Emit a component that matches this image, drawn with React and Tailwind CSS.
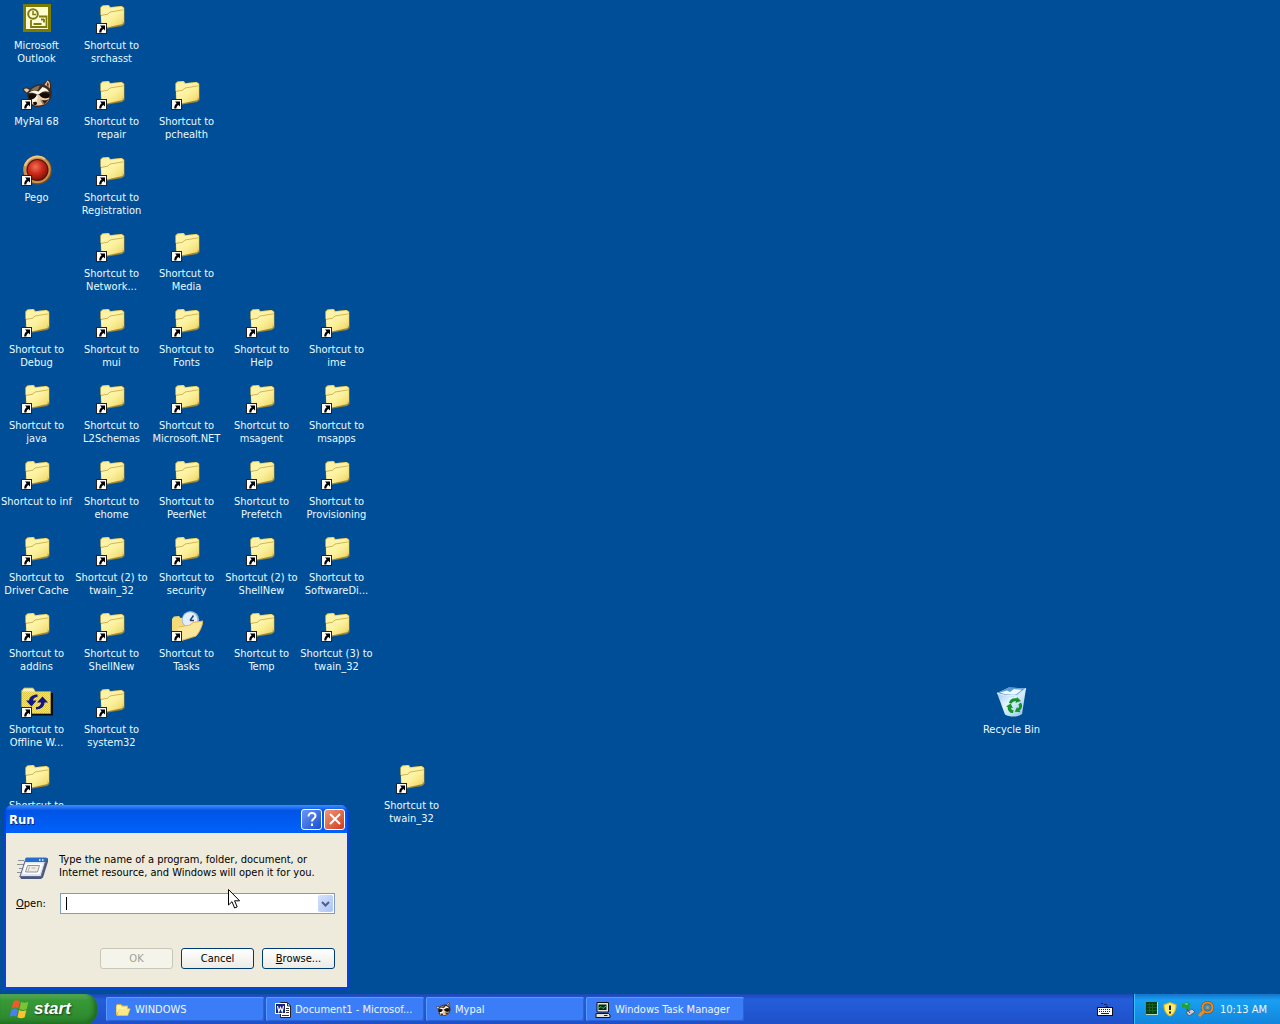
import React from 'react';

const items = [
  [1, 1, 'outlook', 'Microsoft', 'Outlook'],
  [2, 1, 'folder', 'Shortcut to', 'srchasst'],
  [1, 2, 'raccoon', 'MyPal 68'],
  [2, 2, 'folder', 'Shortcut to', 'repair'],
  [3, 2, 'folder', 'Shortcut to', 'pchealth'],
  [1, 3, 'pego', 'Pego'],
  [2, 3, 'folder', 'Shortcut to', 'Registration'],
  [2, 4, 'folder', 'Shortcut to', 'Network...'],
  [3, 4, 'folder', 'Shortcut to', 'Media'],
  [1, 5, 'folder', 'Shortcut to', 'Debug'],
  [2, 5, 'folder', 'Shortcut to', 'mui'],
  [3, 5, 'folder', 'Shortcut to', 'Fonts'],
  [4, 5, 'folder', 'Shortcut to', 'Help'],
  [5, 5, 'folder', 'Shortcut to', 'ime'],
  [1, 6, 'folder', 'Shortcut to', 'java'],
  [2, 6, 'folder', 'Shortcut to', 'L2Schemas'],
  [3, 6, 'folder', 'Shortcut to', 'Microsoft.NET'],
  [4, 6, 'folder', 'Shortcut to', 'msagent'],
  [5, 6, 'folder', 'Shortcut to', 'msapps'],
  [1, 7, 'folder', 'Shortcut to inf'],
  [2, 7, 'folder', 'Shortcut to', 'ehome'],
  [3, 7, 'folder', 'Shortcut to', 'PeerNet'],
  [4, 7, 'folder', 'Shortcut to', 'Prefetch'],
  [5, 7, 'folder', 'Shortcut to', 'Provisioning'],
  [1, 8, 'folder', 'Shortcut to', 'Driver Cache'],
  [2, 8, 'folder', 'Shortcut (2) to', 'twain_32'],
  [3, 8, 'folder', 'Shortcut to', 'security'],
  [4, 8, 'folder', 'Shortcut (2) to', 'ShellNew'],
  [5, 8, 'folder', 'Shortcut to', 'SoftwareDi...'],
  [1, 9, 'folder', 'Shortcut to', 'addins'],
  [2, 9, 'folder', 'Shortcut to', 'ShellNew'],
  [3, 9, 'tasks', 'Shortcut to', 'Tasks'],
  [4, 9, 'folder', 'Shortcut to', 'Temp'],
  [5, 9, 'folder', 'Shortcut (3) to', 'twain_32'],
  [1, 10, 'offline', 'Shortcut to', 'Offline W...'],
  [2, 10, 'folder', 'Shortcut to', 'system32'],
  [14, 10, 'bin', 'Recycle Bin'],
  [1, 11, 'folder', 'Shortcut to'],
  [6, 11, 'folder', 'Shortcut to', 'twain_32'],
];

function Defs() {
  return (
    <svg width="0" height="0" className="absolute" aria-hidden="true">
      <defs>
        <linearGradient id="fold" x1="0" y1="0" x2="1" y2="1">
          <stop offset="0" stopColor="#fffbc4" />
          <stop offset="0.5" stopColor="#fbf09a" />
          <stop offset="1" stopColor="#ecd25c" />
        </linearGradient>
        <radialGradient id="red" cx="0.4" cy="0.35" r="0.7">
          <stop offset="0" stopColor="#f0705a" />
          <stop offset="0.5" stopColor="#cc2a18" />
          <stop offset="1" stopColor="#7c1008" />
        </radialGradient>
        <linearGradient id="glass" x1="0" y1="0" x2="1" y2="1">
          <stop offset="0" stopColor="#8fc0e8" />
          <stop offset="0.45" stopColor="#e4f4ff" />
          <stop offset="1" stopColor="#8fc0e6" />
        </linearGradient>
        <pattern id="dither" width="2" height="2" patternUnits="userSpaceOnUse">
          <rect width="2" height="2" fill="#f4e566" />
          <rect width="1" height="1" fill="#dfca48" />
          <rect x="1" y="1" width="1" height="1" fill="#dfca48" />
        </pattern>
      </defs>
    </svg>
  );
}

function Arrow() {
  return (
    <g>
      <rect x="0.5" y="20.5" width="10" height="10" fill="#fff" stroke="#222" />
      <path d="M4 22.500h5v5l-1.600-1.600c-1.400 1.100-2 2-2 3.600H3.200c0-2.400.9-3.900 2.400-5.200z" fill="#000" />
    </g>
  );
}

function Folder() {
  return (
    <g>
      <path d="M4.500 4.500 6.500 2.500l6.500-.5 1.500 2L26 3l2.500 2v16L26 23 8.500 26 5 24z" fill="#9c8638" />
      <path d="M4.500 4.500 6.500 2.500l6-.5 1.800 2.200L25.500 3 28 4.800v15.700L22 9 4.500 12z" fill="#f2d96c" />
      <path d="M5 5.500 7 3.500l5-.5 1.800 2.300 11-1.600L27 5v2.500L13 9.800 11 12l-6 .6z" fill="#fdf3a8" />
      <path d="M5 12.500 11.500 11.500 14 9.200 27.500 7l-.8 14L8.500 25 5.500 23z" fill="url(#fold)" />
      <path d="M5 12.300 11.500 11.300 14 9l13.500-2.200" fill="none" stroke="#cdb04a" strokeWidth="0.9" />
    </g>
  );
}

function Raccoon() {
  return (
    <g>
      <path d="M2 9.500c2-1.500 5-1.500 7 .5C12 6.500 17 4.500 22.500 5.500L26.500.5c3 .5 4.500 4.500 3.500 9 1.500 4 1.300 8-1 11.500-2.500 4.500-8 7.500-14 7-4-.4-7-3-7.500-6.500L5.500 14C3.500 13 2 11.500 2 9.500z" fill="#3a2a1e" />
      <path d="M3 10c1.700-1 4-.5 5.500 1L6 13.500C4.500 12.500 3.200 11.500 3 10zM23.500 6l3-4.500c2.300 1 3 4.500 2 8-1-1.700-2.800-3-5-3.500z" fill="#eec9a6" />
      <path d="M25.500 6l1.200-3c1.200 1 1.200 3.500.8 5z" fill="#5c3020" />
      <path d="M9 12c2.500-3.500 6-5 10-5.500l-2 4.500c-3-.3-5.500 0-8 1z" fill="#857058" />
      <path d="M7.500 14c3-3 7-3.300 10-1.500l4-4.500c3 .6 5.500 2.500 6.500 5-3-1.500-6-1-9 1.500-1 1-2 1.300-3 .8-2.500-1.500-5.500-2-8.500-1.300z" fill="#fff6e6" />
      <path d="M16 15l3 1.500c1.500 2.500 5 3.500 9.500 2-1.500 4.500-5.500 7.500-10.500 8-4 .4-7-.7-8.500-3C12 21.500 14.500 19 16 15z" fill="#e9cda9" />
      <path d="M7.500 16c2.500-1.500 5.500-1.300 8 0-.5 2.700-3 4.500-7 4.500-1-1.300-1.300-3-1-4.500zM18.500 15.500c3-2.500 7-2.500 10 0 .5 2-1 3.500-3.500 3.800-2.500.2-5.300-1.300-6.500-3.800z" fill="#120c08" />
      <path d="M9 20.500c3.500 0 5.500-1.500 7-4.500.8 2 .8 4.500-.5 6.500-2 1.500-5 1-6.500-2z" fill="#fff6e8" />
      <path d="M19 20.500c3 1.500 6.500 1 9.500-1-1 3-3.500 5.500-6.500 6.500z" fill="#a57c58" />
      <path d="M21 21c2.300.7 4.500.5 6.500-.6L23.500 25z" fill="#2a1a12" />
      <path d="M12 23.500c1.500-1.300 4-.8 4 .7s-2 2.300-3.200 1.700z" fill="#120c0a" />
    </g>
  );
}

function DeskIcon({ kind }) {
  return (
    <svg viewBox="0 0 32 32" className="h-8 w-8" aria-hidden="true">
      {kind === 'folder' && <Folder />}
      {kind === 'outlook' && (
        <g fill="none" stroke="#7c7a10">
          <rect x="3.500" y="2.500" width="25" height="25" fill="#fffbd0" stroke="#7c7a00" strokeWidth="3" />
          <circle cx="12" cy="11" r="4.800" strokeWidth="2" />
          <path d="M12 8v3.500h3" strokeWidth="1.500" />
          <path d="M18 13.500h7.500v10.500H10v-7" strokeWidth="1.800" />
          <path d="M12.500 21h8M20 16.500h3M23 16v3.500" strokeWidth="1.800" />
        </g>
      )}
      {kind === 'raccoon' && <Raccoon />}
      {kind === 'pego' && (
        <g>
          <circle cx="16.500" cy="15" r="14.500" fill="#7a4a1c" />
          <circle cx="16" cy="14.500" r="13.700" fill="#c8924e" />
          <path d="M4 11A13 13 0 0 1 24 4" fill="none" stroke="#ecc88c" strokeWidth="2" />
          <circle cx="16.500" cy="15" r="11" fill="#4e120a" />
          <circle cx="16.500" cy="15" r="10" fill="url(#red)" />
        </g>
      )}
      {kind === 'tasks' && (
        <g>
          <path d="M1 8l2-2.500 5-.5 1.500 2L24 5v20L5 28 1 24z" fill="#f3d978" />
          <circle cx="19.500" cy="8.700" r="8.700" fill="#8eb0d4" />
          <circle cx="19" cy="8.700" r="7.400" fill="#e2eefb" />
          <path d="M19 9.500l3.500-5M19 9.500h4" stroke="#23456f" strokeWidth="1.500" fill="none" />
          <path d="M8 16l11-2 3-2.500L32 10c-1 6-4 12-7 15L9 30 3 26z" fill="#fae69a" />
          <path d="M8 16l11-2 3-2.500L32 10c-1 6-4 12-7 15L9 30" fill="none" stroke="#e3b75b" />
        </g>
      )}
      {kind === 'offline' && (
        <g>
          <path d="M2 27.500h29V6" fill="none" stroke="#0a0a14" strokeWidth="2" />
          <path d="M.5 26V4L3 1h9l2.500 3.500H29.500V26.500H.5z" fill="url(#dither)" stroke="#a89440" />
          <path d="M1 4.500 3 1.500h9L14 4.500z" fill="#f4f0c8" />
          <path d="M16.500 7.500c-5 0-8 2.500-8.500 6H5l5.500 6 5-6h-3.500c.2-2 2-3.500 4.500-3.500zM15 22.500c5 0 8.500-3 8.500-7H27l-5.500-6L16 15.500h4c0 2.500-2 4.500-5 4.500z" fill="#14148c" />
        </g>
      )}
      {kind === 'bin' && (
        <g>
          <path d="M1 6 13 .5 30 1.500 26 27c-4 3.200-12 3.500-17 .5z" fill="url(#glass)" />
          <path d="M1 6 13 .5 30 1.500 21 9C14 9.500 7 8.500 1 6z" fill="#5b9bd2" />
          <path d="M4 5.500l7-2 3 1.500 4-3 8 .8-6 4.700c-6 .5-11 0-16-2z" fill="#eef9ff" />
          <path d="M1 6c6 2.500 13 3 20 2.500L30 1.500" fill="none" stroke="#d7efff" strokeWidth="1.200" />
          <path d="M13 16c.5-3.500 4-5.500 7.500-4.500L21 10l4 4-5.500 2 .5-1.700c-2-.5-3.700.5-4.200 2.200zM25 15.500c2 3 1.200 6.500-1.500 8l1 1.700-5.700-.5 2.300-4.700.9 1.500c1.200-1 1.300-3 .4-4.300zM17 26c-3.500 0-5.700-2.700-5.200-6L10 19.500l4.700-3 2.300 4.700-2-.4c0 1.500 1 2.500 2.500 2.500z" fill="#14942a" />
        </g>
      )}
      {kind !== 'outlook' && kind !== 'bin' && <Arrow />}
    </svg>
  );
}

function DesktopItem({ item: [col, row, kind, ...lines] }) {
  return (
    <li style={{ gridColumn: col, gridRow: row }}>
      <button type="button" className="flex w-full flex-col items-center gap-1 whitespace-nowrap pt-[3px] text-[#e9fbff]">
        <DeskIcon kind={kind} />
        <span>
          {lines.map((l) => (
            <span key={l} className="block">{l}</span>
          ))}
        </span>
      </button>
    </li>
  );
}

function RunDialog() {
  return (
    <section
      aria-label="Run"
      className="absolute bottom-1 left-1 w-[345px] rounded-t-lg border-x-2 border-b-3 border-[#0842d8] bg-[#0b50e8] text-black"
    >
      <header className="flex h-7 items-center gap-0.5 rounded-t-md bg-linear-to-b from-[#3c8cff] from-0% via-[#0054e6] via-20% to-[#0062fb] pr-0.5 pl-[3px]">
        <h1 className="flex-1 text-[13px] font-bold text-white [text-shadow:1px_1px_#0a2a80]">Run</h1>
        <button type="button" aria-label="Help" className="flex size-[21px] items-center justify-center rounded-[3px] border border-white bg-linear-to-br from-[#6b96f6] to-[#1a4ed0]">
          <svg viewBox="0 0 12 14" className="h-3.5 w-3" fill="none" stroke="#fff" strokeWidth="2" aria-hidden="true">
            <path d="M2.500 4.500C2.500 2.200 4 1 6 1s3.500 1.200 3.500 3C9.500 6.500 6 6.500 6 9.500M6 11.500V14" />
          </svg>
        </button>
        <button type="button" aria-label="Close" className="flex size-[21px] items-center justify-center rounded-[3px] border border-white bg-linear-to-br from-[#f09478] to-[#cc3a12]">
          <svg viewBox="0 0 12 12" className="size-3" stroke="#fff" strokeWidth="2" aria-hidden="true">
            <path d="M1 1l10 10M11 1 1 11" />
          </svg>
        </button>
      </header>
      <form className="bg-[#eeebdd] pt-[19px] pr-3 pb-[18px] pl-2.5" onSubmit={(e) => e.preventDefault()}>
        <div className="flex items-center gap-[11px]">
          <svg viewBox="0 0 32 32" className="-mb-1 size-8 shrink-0" aria-hidden="true">
            <path d="M2 8.500h6M1 12.500h7M3 16.500h3M1 20.500h4M3 24.500h2" stroke="#8b8f9c" />
            <path d="M10 6h21.500l1 2-5.500 17.500-2 1.500H5l-1-2z" fill="#4d5878" />
            <path d="M10 6h20.500L25 24.500H4z" fill="#dfe4ef" stroke="#5c6a90" />
            <path d="M10.200 6h20.500l-1.200 4H9z" fill="#2270cc" />
            <path d="M23 8h1.500M26 8h1.500" stroke="#fff" strokeWidth="1.500" />
            <path d="M9.500 11.500H27L23.500 22H6.500z" fill="#fff" />
            <path d="M11.500 13.500h12l-2 6.500H9.500z" fill="#f0eedf" stroke="#8c93a6" />
            <path d="M13.500 14.500l-1.500 5M15.500 16h4" stroke="#b4b6bc" />
          </svg>
          <p>
            Type the name of a program, folder, document, or
            <br />
            Internet resource, and Windows will open it for you.
          </p>
        </div>
        <div className="mt-[13px] flex items-center">
          <label htmlFor="open" className="w-11">
            <u>O</u>pen:
          </label>
          <div className="flex h-[21px] flex-1 border border-[#7f9db9] bg-white p-px">
            <input id="open" type="text" className="w-0 flex-1 bg-[linear-gradient(#000,#000)] bg-[length:1px_13px] bg-[position:4px_2px] bg-no-repeat px-1 outline-none" />
            <button type="button" aria-label="Show history" className="flex w-[15px] items-center justify-center rounded-xs bg-linear-to-br from-[#d6e1fd] to-[#aec3f6]">
              <svg viewBox="0 0 9 6" className="h-1.5 w-[9px]" fill="none" stroke="#4d6185" strokeWidth="2" aria-hidden="true">
                <path d="M1 1l3.500 3.500L8 1" />
              </svg>
            </button>
          </div>
        </div>
        <div className="mt-[34px] flex justify-end gap-2">
          <button type="submit" disabled className="h-[21px] w-[73px] rounded-[3px] border border-[#c9c7ba] bg-[#f5f4ea] text-[#a1a192]">
            OK
          </button>
          <button type="button" className="h-[21px] w-[73px] rounded-[3px] border border-[#003c74] bg-linear-to-b from-white to-[#ecebe5]">
            Cancel
          </button>
          <button type="button" className="h-[21px] w-[73px] rounded-[3px] border border-[#003c74] bg-linear-to-b from-white to-[#ecebe5]">
            <u>B</u>rowse...
          </button>
        </div>
      </form>
    </section>
  );
}

function TaskIcon({ kind }) {
  return (
    <svg viewBox="0 0 16 16" className="size-4 shrink-0" aria-hidden="true">
      {kind === 'folder' && (
        <g>
          <path d="M1 3.500 2 2h4l1.500 1.500H13V6l2.500.5L13 14H2l-1-1z" fill="#d9b23c" />
          <path d="M1.500 4 2.500 3h3L7 4.500h5.200V7H5L1.500 12z" fill="#fff2a0" />
          <path d="M4.800 7H15l-2.600 6.200H2.200z" fill="#fbe887" />
        </g>
      )}
      {kind === 'word' && (
        <g>
          <path d="M5.500.5h7L15.500 4v11.500h-10z" fill="#fff" stroke="#222" />
          <path d="M12.500.5V4h3M11 6.500h3M11 8.500h3M11 10.500h3M7 13.500h7" stroke="#333" fill="none" />
          <rect x="0.500" y="1.500" width="10" height="10" fill="#14207c" stroke="#fff" />
          <path d="M2.500 4l1.300 5.500 1.700-4 1.700 4L8.500 4" fill="none" stroke="#fff" strokeWidth="1.200" />
        </g>
      )}
      {kind === 'raccoon' && (
        <g transform="scale(.5)">
          <Raccoon />
        </g>
      )}
      {kind === 'monitor' && (
        <g>
          <path d="M2 .5h11.500v9.500H2zM1 11.500h12.500L15 13v2.500H1z" fill="#e5e2d8" stroke="#111" />
          <rect x="3.500" y="2.500" width="8" height="5.500" fill="#032a10" />
          <path d="M4 6l2-1.500L8 6.500 11 4" stroke="#2ccf5c" fill="none" />
          <path d="M9 13.500h3.500" stroke="#222" />
        </g>
      )}
    </svg>
  );
}

const tasks = [
  ['folder', 'WINDOWS'],
  ['word', 'Document1 - Microsof...'],
  ['raccoon', 'Mypal'],
  ['monitor', 'Windows Task Manager'],
];

function Taskbar() {
  return (
    <footer className="flex h-[30px] items-stretch bg-linear-to-b from-[#1a47b4] from-0% via-[#245edb] via-20% to-[#1f50c8] text-[#eef6ff]">
      <button
        type="button"
        className="flex w-[97px] items-center gap-0.5 rounded-r-xl bg-linear-to-b from-[#5aa95a] from-0% via-[#379a37] via-20% to-[#2c852c] pl-2.5 shadow-[inset_-3px_-2px_4px_#1f6a22]"
      >
        <svg viewBox="1 1 18 18" className="size-5" aria-hidden="true">
          <path d="M4 3c2-1.300 4-1.200 6 .1L8.500 9.500c-2-1.200-4-1.200-6 0z" fill="#ee5a28" />
          <path d="M11 3.500c2 1.200 4 1.200 6.500 0L16 10c-2 1.200-4.500 1.200-6.500 0z" fill="#7cc435" />
          <path d="M2.200 10.500c2-1.200 4-1.100 6 .1l-1.500 6.400c-2-1.200-4-1.200-6 0z" fill="#4a7ff0" />
          <path d="M9.200 11c2 1.200 4.500 1.200 6.500 0l-1.500 6.500c-2 1.200-4.500 1.200-6.500 0z" fill="#fbc52a" />
        </svg>
        <span className="pl-0.5 font-['Liberation_Sans',Arial,sans-serif] text-[17px] leading-5 font-bold text-white italic [text-shadow:1px_1px_2px_#14401a]">
          start
        </span>
      </button>
      <nav aria-label="Open windows" className="flex flex-1 gap-0.5 py-[3px] pl-[9px]">
        {tasks.map(([kind, label]) => (
          <button
            key={label}
            type="button"
            className="flex w-[158px] items-center gap-1 rounded-xs border-t border-l border-[#5c9cff] bg-[#3b7df6] pl-2 shadow-[inset_-1px_-1px_#2a62d8]"
          >
            <TaskIcon kind={kind} />
            <span className="truncate">{label}</span>
          </button>
        ))}
      </nav>
      <button type="button" aria-label="Keyboard" className="mr-5 self-center">
        <svg viewBox="0 0 16 16" className="size-4" aria-hidden="true">
          <path d="M4 2.500h2M7 3.500h3M9 5.500h2" stroke="#16245c" />
          <rect x="0.500" y="6.500" width="15" height="8" fill="#fff" stroke="#111" />
          <path d="M2 8.500h12M2 10.500h12" stroke="#222" strokeDasharray="1 1" />
          <path d="M4 12.500h8" stroke="#222" />
        </svg>
      </button>
      <aside aria-label="Notification area" className="flex w-[147px] items-center gap-0.5 border-l border-[#0b3c9c] bg-linear-to-b from-[#1673c8] from-0% via-[#18a0f2] via-20% to-[#1285dc] pl-2.5 shadow-[inset_1px_0_#3cc0ff]">
        <svg viewBox="0 0 16 16" className="size-4" aria-hidden="true">
          <rect x="2" y="1" width="12" height="13" fill="#b9d8c0" />
          <rect x="2" y="1" width="11" height="12" fill="#0b3d14" />
          <path d="M3 3.500h10M3 6.500h10M3 9.500h10M5.500 2v10M8.500 2v10" stroke="#17601f" />
        </svg>
        <svg viewBox="0 0 16 16" className="size-4" aria-hidden="true">
          <path d="M8 1l6.500 2.500c0 6-2 10-6.500 12-4.500-2-6.500-6-6.500-12z" fill="#e9b91e" />
          <path d="M8 2.200l5.300 2c0 5-1.700 8.300-5.300 10-3.600-1.700-5.300-5-5.300-10z" fill="#fdee70" />
          <path d="M8 4.500V9M8 10.500v2" stroke="#222" strokeWidth="2" />
        </svg>
        <svg viewBox="0 0 16 16" className="size-4" aria-hidden="true">
          <path d="M2 3l5-2 4 2-2 2 1 3-4 1-1-3-3 1z" fill="#1fa03c" />
          <path d="M4 3l3-1 1 2z" fill="#8be58c" />
          <path d="M6 11l6-3 3 3-6 4z" fill="#c9cdd3" stroke="#555d6a" />
          <path d="M7 8l3 4" stroke="#444c58" />
        </svg>
        <svg viewBox="0 0 16 16" className="size-4" aria-hidden="true">
          <circle cx="9.500" cy="6.500" r="5" fill="none" stroke="#7c3a08" strokeWidth="3" />
          <circle cx="9.500" cy="6.500" r="5" fill="none" stroke="#f28a1c" strokeWidth="2.200" />
          <circle cx="9.500" cy="6.500" r="1.500" fill="#f28a1c" />
          <path d="M5.500 10.500 1 15" stroke="#f28a1c" strokeWidth="3" />
        </svg>
        <time className="ml-1 whitespace-nowrap">10:13 AM</time>
      </aside>
    </footer>
  );
}

export default function App() {
  return (
    <div className="flex min-h-screen flex-col bg-[#004e98] font-['DejaVu_Sans_Condensed','DejaVu_Sans',sans-serif] text-[11px] leading-[13px]">
      <Defs />
      <main className="relative flex-1">
        <ul className="-ml-px grid auto-cols-[75px] auto-rows-[76px] grid-cols-[repeat(auto-fill,75px)]">
          {items.map((item) => (
            <DesktopItem key={item[0] + '-' + item[1]} item={item} />
          ))}
        </ul>
        <RunDialog />
        <svg viewBox="0 0 12 20" className="pointer-events-none absolute bottom-[85px] left-[228px] h-5 w-3" aria-hidden="true">
          <path d="M.5.5v15.500l3.500-3.300 2.600 6.300 2.600-1.100-2.600-6.100h5z" fill="#fff" stroke="#000" />
        </svg>
      </main>
      <Taskbar />
    </div>
  );
}
